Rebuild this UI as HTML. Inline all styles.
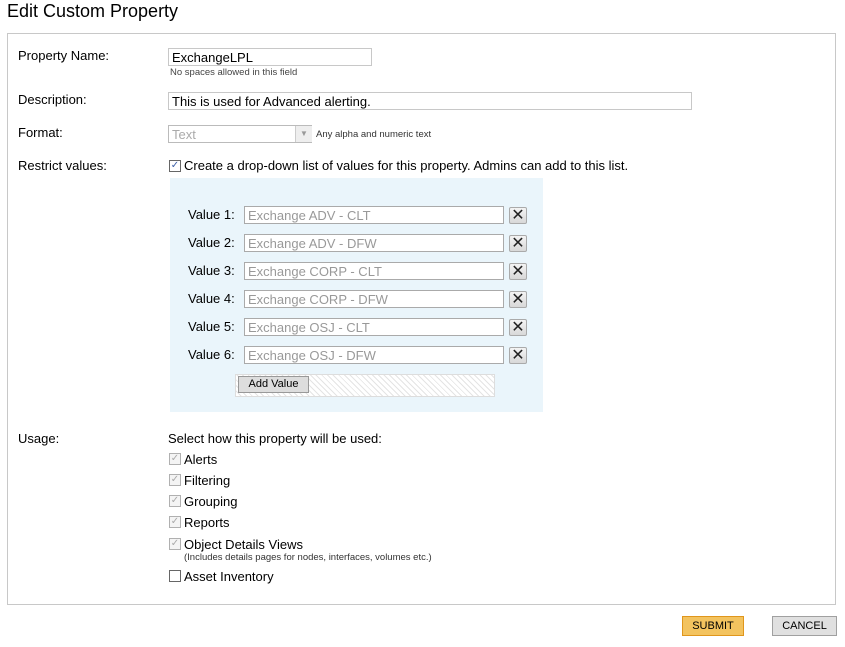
<!DOCTYPE html>
<html><head><style>
body{margin:0;width:845px;height:647px;background:#fff;font-family:"Liberation Sans",Arial,sans-serif;color:#000;position:relative;overflow:hidden}
.a{position:absolute}
.lbl{font-size:13px;left:18px}
.in{position:absolute;border:1px solid #c8c8c8;background:#fff;font-size:13px;box-sizing:border-box;padding:1px 3px;line-height:15px}
.cb{position:absolute;width:12px;height:12px;border:1px solid #b0b0b0;background:#f4f4f4;box-sizing:border-box;font-size:10px;line-height:10px;text-align:center;color:#aaa}
.t{position:absolute;font-size:13px;left:184px}
.vl{position:absolute;font-size:13px;left:188px}
.x{position:absolute;left:509px;width:18px;height:17px;border:1px solid #aaa;background:linear-gradient(#f4f4f4,#d8d8d8);box-sizing:border-box;border-radius:2px;font-size:16px;line-height:15px;text-align:center;color:#222}
</style></head><body>
<div class="a" style="left:7px;top:1px;font-size:18px">Edit Custom Property</div>
<div class="a" style="left:7px;top:33px;width:829px;height:572px;border:1px solid #c8c8c8;box-sizing:border-box"></div>
<div class="a lbl" style="top:48px">Property Name:</div>
<div class="in" style="left:168px;top:48px;width:204px;height:18px">ExchangeLPL</div>
<div class="a" style="left:170px;top:67px;font-size:9.5px;color:#444">No spaces allowed in this field</div>
<div class="a lbl" style="top:92px">Description:</div>
<div class="in" style="left:168px;top:92px;width:524px;height:18px">This is used for Advanced alerting.</div>
<div class="a lbl" style="top:125px">Format:</div>
<div class="in" style="left:168px;top:125px;width:144px;height:18px;color:#aaa;border-color:#bbb">Text</div>
<div class="a" style="left:295px;top:126px;width:16px;height:16px;background:#eee;border-left:1px solid #ccc;font-size:8px;color:#999;text-align:center;line-height:16px">▼</div>
<div class="a" style="left:316px;top:129px;font-size:9.5px;color:#333">Any alpha and numeric text</div>
<div class="a lbl" style="top:158px">Restrict values:</div>
<div class="cb" style="left:169px;top:160px;border-color:#666;background:#fff;color:#3c5fa8;font-size:10px">✓</div>
<div class="t" style="top:158px">Create a drop-down list of values for this property. Admins can add to this list.</div>
<div class="a" style="left:170px;top:178px;width:373px;height:234px;background:#eaf5fb"></div>
<div class="vl" style="top:207px">Value 1:</div><div class="in" style="left:244px;top:206px;width:260px;height:18px;color:#999;border-color:#aaa">Exchange ADV - CLT</div><div class="x" style="top:207px">✕</div>
<div class="vl" style="top:235px">Value 2:</div><div class="in" style="left:244px;top:234px;width:260px;height:18px;color:#999;border-color:#aaa">Exchange ADV - DFW</div><div class="x" style="top:235px">✕</div>
<div class="vl" style="top:263px">Value 3:</div><div class="in" style="left:244px;top:262px;width:260px;height:18px;color:#999;border-color:#aaa">Exchange CORP - CLT</div><div class="x" style="top:263px">✕</div>
<div class="vl" style="top:291px">Value 4:</div><div class="in" style="left:244px;top:290px;width:260px;height:18px;color:#999;border-color:#aaa">Exchange CORP - DFW</div><div class="x" style="top:291px">✕</div>
<div class="vl" style="top:319px">Value 5:</div><div class="in" style="left:244px;top:318px;width:260px;height:18px;color:#999;border-color:#aaa">Exchange OSJ - CLT</div><div class="x" style="top:319px">✕</div>
<div class="vl" style="top:347px">Value 6:</div><div class="in" style="left:244px;top:346px;width:260px;height:18px;color:#999;border-color:#aaa">Exchange OSJ - DFW</div><div class="x" style="top:347px">✕</div>
<div class="a" style="left:235px;top:374px;width:260px;height:23px;border:1px solid #ddd;box-sizing:border-box;background:repeating-linear-gradient(45deg,#fff 0 3px,#e4e4e4 3px 4px)"></div>
<div class="a" style="left:238px;top:376px;width:71px;height:17px;border:1px solid #999;background:#ddd;box-sizing:border-box;font-size:11px;text-align:center;line-height:15px">Add Value</div>
<div class="a lbl" style="top:431px">Usage:</div>
<div class="a" style="left:168px;top:431px;font-size:13px">Select how this property will be used:</div>
<div class="cb" style="left:169px;top:453px">✓</div><div class="t" style="top:452px">Alerts</div>
<div class="cb" style="left:169px;top:474px">✓</div><div class="t" style="top:473px">Filtering</div>
<div class="cb" style="left:169px;top:495px">✓</div><div class="t" style="top:494px">Grouping</div>
<div class="cb" style="left:169px;top:516px">✓</div><div class="t" style="top:515px">Reports</div>
<div class="cb" style="left:169px;top:538px">✓</div><div class="t" style="top:537px">Object Details Views</div>
<div class="a" style="left:184px;top:552px;font-size:9.5px;color:#333">(Includes details pages for nodes, interfaces, volumes etc.)</div>
<div class="cb" style="left:169px;top:570px;border-color:#666;background:#fff"></div><div class="t" style="top:569px">Asset Inventory</div>
<div class="a" style="left:682px;top:616px;width:62px;height:20px;background:#f3c35f;border:1px solid #e0961c;box-sizing:border-box;font-size:11px;text-align:center;line-height:18px">SUBMIT</div>
<div class="a" style="left:772px;top:616px;width:65px;height:20px;background:#e0e0e0;border:1px solid #a0a0a0;box-sizing:border-box;font-size:11px;text-align:center;line-height:18px">CANCEL</div>
</body></html>
